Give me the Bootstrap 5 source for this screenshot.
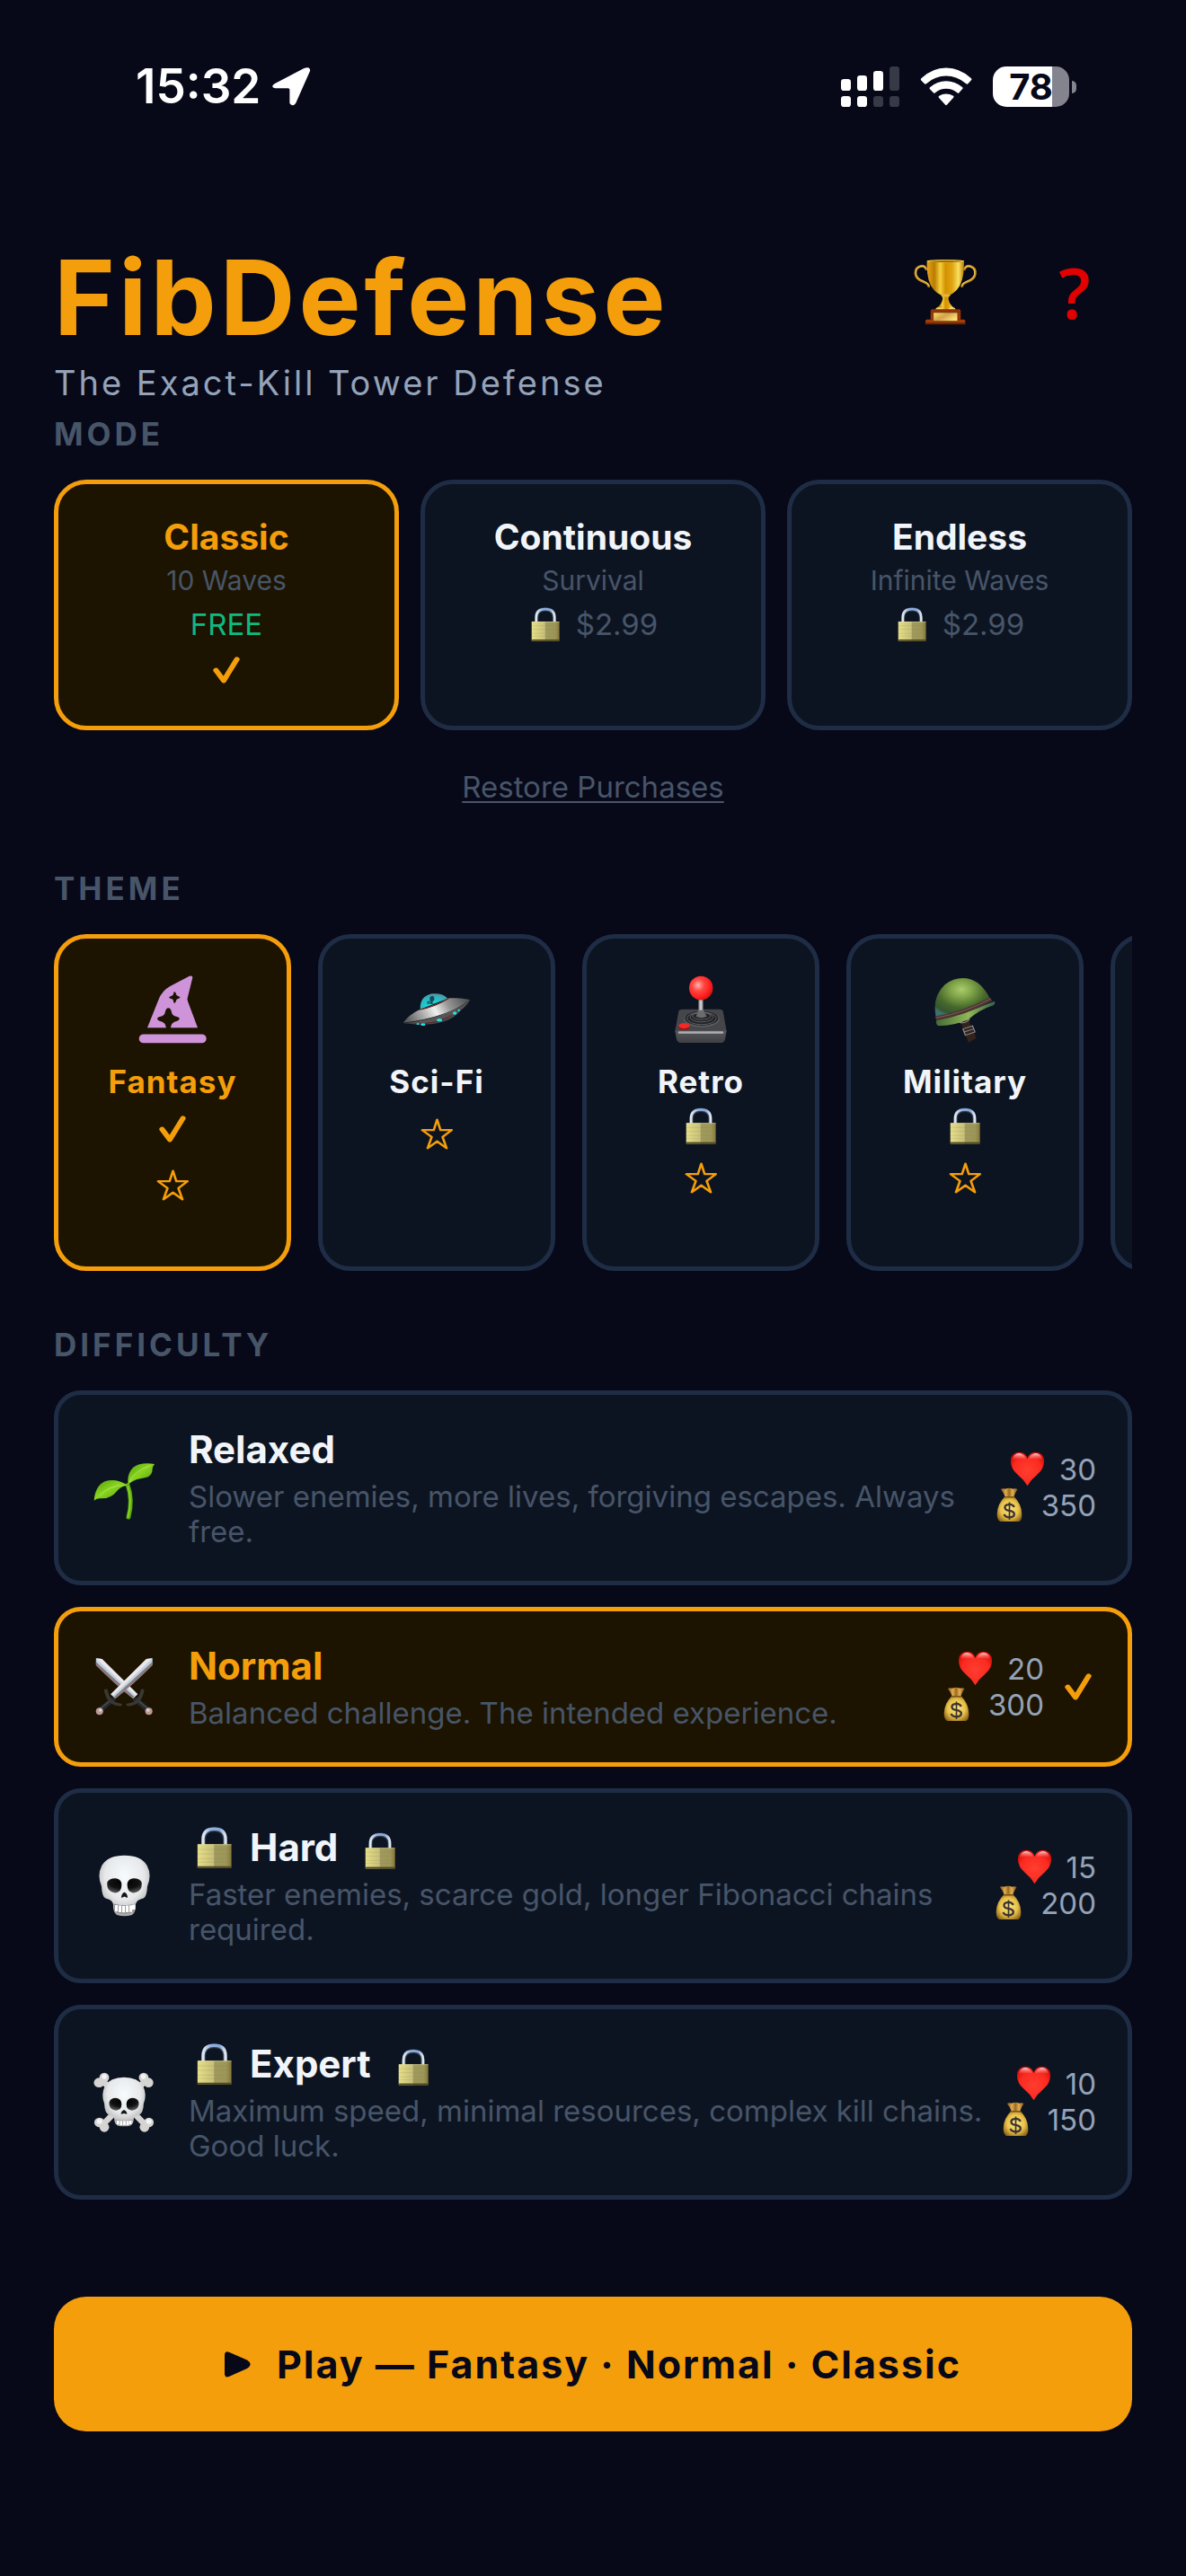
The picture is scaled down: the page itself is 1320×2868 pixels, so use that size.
<!DOCTYPE html>
<html lang="en" data-bs-theme="dark">
<head>
<meta charset="utf-8">
<meta name="viewport" content="width=device-width, initial-scale=1">
<title>FibDefense</title>
<link href="https://cdn.jsdelivr.net/npm/bootstrap@5.3.0/dist/css/bootstrap.min.css" rel="stylesheet">
<style>
:root{--ink:#070818;--panel:#0d1421;--line:#1e2d45;--gold:#f59e0b;--gold-bg:#1c1400;--dim:#475569;--soft:#94a3b8;--snow:#f1f5f9}
body{background:var(--ink);color:var(--snow);font-family:Inter,"Liberation Sans",sans-serif;font-size:33px;line-height:40px;min-height:100vh}
svg{display:block;flex:none}
.defs{position:absolute;width:0;height:0}
.gutter{padding-left:60px;padding-right:60px}
/* status bar */
.status{padding:64px 122px 0 151px;color:#fff}
.status-row{height:65px}
.clock{font-size:53px;font-weight:600;line-height:65px}
.clock-group{gap:13px}
.status-icons{gap:23px}
.cell{width:85px;height:45px;border-radius:15px;background:linear-gradient(to right,#fff 66px,#84848e 66px);color:var(--ink);font-size:40px;line-height:45px;font-weight:700}
.cell-tip{width:5px;height:14px;border-radius:0 5px 5px 0;background:#84848e;margin-left:3px}
/* heading */
.top{padding-top:130px;margin-bottom:11px}
.brand{font-size:116px;line-height:144px;font-weight:700;letter-spacing:4px;color:var(--gold)}
.tagline{font-size:38px;line-height:46px;letter-spacing:3px;color:var(--soft)}
.icon-btn{width:128px;height:132px;color:#e20000;font:600 78px/132px "Open Sans",sans-serif}
.plain-btn{background:none;border:0;padding:0}
.section-label{font-size:35px;line-height:46px;font-weight:700;letter-spacing:4px;color:var(--dim);margin:0 0 28px}
/* option panels */
.option{background:var(--panel);border:5px solid var(--line);border-radius:36px;color:var(--snow);padding:0}
.option.chosen{background:var(--gold-bg);border-color:var(--gold)}
.chosen .name{color:var(--gold)}
.name{font-weight:700}
.modes{gap:24px}
.mode{padding:34px 12px 37px}
.mode .name{font-size:39px;line-height:50px}
.mode .note{font-size:30px;line-height:46px;color:var(--dim)}
.price{height:52px;gap:15px;color:var(--dim)}
.free{color:#10b981}
.tick-row{height:50px}
.restore{margin:43px 0 70px}
.restore a{color:var(--dim);text-underline-offset:4px;text-decoration-thickness:2px}
.themes{gap:30px;margin-bottom:59px}
.theme{flex:0 0 264px;height:375px;padding-top:41px}
.theme .name{font-size:35px;line-height:44px;letter-spacing:1px;margin-top:20px}
.pic{width:76px;height:76px;flex:none}
.mark-tick{height:57px;padding-top:4px}
.mark-lock{height:49px;padding-top:6px}
.mark-star{height:66px;margin-top:3px}
.levels{gap:24px}
.level{border-radius:30px;padding:34px 35px 35px}
.level .name{font-size:42px;line-height:54px;gap:12px}
.level .blurb{line-height:39px;color:var(--dim);margin-top:6px}
.level-text{padding-left:34px;min-width:0}
.lock-lead{width:56px;padding-bottom:3px}
.lock-tail{margin-left:18px;padding-bottom:3px}
.stats{color:var(--soft)}
.stat{gap:16px}
.level-tick{width:35px;margin-left:23px}
.play{margin:108px 0 100px;height:150px;border:0;border-radius:36px;background:var(--gold);color:var(--ink);font-size:43px;font-weight:700;letter-spacing:2px;gap:29px}
</style>
</head>
<body>
<svg class="defs" aria-hidden="true">
<defs>
<linearGradient id="gold" x1="0" x2="1"><stop offset="0" stop-color="#e9a51c"/><stop offset=".2" stop-color="#b87c00"/><stop offset=".36" stop-color="#f6cf3c"/><stop offset=".5" stop-color="#d39100"/><stop offset=".68" stop-color="#e0a414"/><stop offset=".85" stop-color="#f9e15e"/><stop offset="1" stop-color="#b97a05"/></linearGradient>
<linearGradient id="wood" x1="0" x2="0" y1="0" y2="1"><stop offset="0" stop-color="#8a3208"/><stop offset="1" stop-color="#a33a08"/></linearGradient>
<linearGradient id="plate" x1="0" x2="1" y1="0" y2=".6"><stop offset="0" stop-color="#fde26a"/><stop offset=".5" stop-color="#d3a24a"/><stop offset="1" stop-color="#fbe37a"/></linearGradient>
<linearGradient id="brass" x1="0" x2="1"><stop offset="0" stop-color="#e6e08c"/><stop offset=".3" stop-color="#d2ca7c"/><stop offset=".47" stop-color="#c8c07c"/><stop offset=".5" stop-color="#a09a5e"/><stop offset=".85" stop-color="#9c9658"/><stop offset="1" stop-color="#86763a"/></linearGradient>
<linearGradient id="steel" x1="0" x2="1"><stop offset="0" stop-color="#dfeaf5"/><stop offset=".35" stop-color="#8fb0e0"/><stop offset=".75" stop-color="#86a8dc"/><stop offset="1" stop-color="#dfe8f2"/></linearGradient>
<linearGradient id="saucer" x1="0" x2="1" y1=".6" y2=".4"><stop offset="0" stop-color="#5c5c5c"/><stop offset=".25" stop-color="#a8a8a8"/><stop offset=".48" stop-color="#f0f0ee"/><stop offset=".7" stop-color="#989898"/><stop offset="1" stop-color="#555"/></linearGradient>
<radialGradient id="dome" cx=".5" cy=".8" r=".8"><stop offset="0" stop-color="#16e0dc"/><stop offset=".7" stop-color="#2db6c0"/><stop offset="1" stop-color="#5a8ea0"/></radialGradient>
<radialGradient id="ball" cx=".38" cy=".38" r=".7"><stop offset="0" stop-color="#ffb3ae"/><stop offset=".35" stop-color="#ff4a44"/><stop offset=".7" stop-color="#ff2020"/><stop offset="1" stop-color="#c81010"/></radialGradient>
<linearGradient id="stick" x1="0" x2="1"><stop offset="0" stop-color="#777"/><stop offset=".5" stop-color="#ddd"/><stop offset="1" stop-color="#777"/></linearGradient>
<linearGradient id="casefront" x1="0" x2="0" y1="0" y2="1"><stop offset="0" stop-color="#57585c"/><stop offset="1" stop-color="#3f4044"/></linearGradient>
<radialGradient id="shell" cx=".48" cy=".28" r=".68"><stop offset="0" stop-color="#a9cc6c"/><stop offset=".3" stop-color="#7fa348"/><stop offset=".65" stop-color="#47682c"/><stop offset=".9" stop-color="#35562f"/><stop offset="1" stop-color="#3f706c"/></radialGradient>
<linearGradient id="rim" x1="0" x2="1"><stop offset="0" stop-color="#456a38"/><stop offset=".55" stop-color="#8fb856"/><stop offset="1" stop-color="#34604c"/></linearGradient>
<linearGradient id="leaf" x1="0" x2="1" y1="0" y2="1"><stop offset="0" stop-color="#4f9c08"/><stop offset=".45" stop-color="#8ad420"/><stop offset="1" stop-color="#4b960c"/></linearGradient>
<radialGradient id="bone" cx=".5" cy=".35" r=".65"><stop offset="0" stop-color="#f7fbfd"/><stop offset=".6" stop-color="#e6e8ea"/><stop offset="1" stop-color="#a9a8a6"/></radialGradient>
<radialGradient id="socket" cx=".5" cy=".3" r=".7"><stop offset="0" stop-color="#000"/><stop offset=".6" stop-color="#111"/><stop offset="1" stop-color="#555"/></radialGradient>
<radialGradient id="heartfill" cx=".5" cy=".55" r=".6"><stop offset="0" stop-color="#ff3e30"/><stop offset=".7" stop-color="#fb2a20"/><stop offset="1" stop-color="#d80c08"/></radialGradient>
<linearGradient id="shine" x1="0" x2="0" y1="0" y2="1"><stop offset="0" stop-color="#fff" stop-opacity=".85"/><stop offset="1" stop-color="#ff6a60" stop-opacity="0"/></linearGradient>
<radialGradient id="sack" cx=".5" cy=".5" r=".6"><stop offset="0" stop-color="#ffe680"/><stop offset=".6" stop-color="#e8c14a"/><stop offset="1" stop-color="#8e6418"/></radialGradient>
<linearGradient id="sacktop" x1="0" x2="1"><stop offset="0" stop-color="#7c4f10"/><stop offset=".3" stop-color="#e0ac50"/><stop offset=".5" stop-color="#9a6a1c"/><stop offset=".7" stop-color="#e3b056"/><stop offset="1" stop-color="#7c4f10"/></linearGradient>
</defs>
<symbol id="i-signal" viewBox="51 42 195 135"><g fill="#fff"><rect x="51" y="84" width="33" height="39" rx="10"/><rect x="105" y="72" width="33" height="51" rx="10"/><rect x="159" y="57" width="33" height="66" rx="10"/><rect x="51" y="141" width="33" height="36" rx="10"/><rect x="105" y="141" width="33" height="36" rx="10"/></g><g fill="#383946"><rect x="213" y="42" width="33" height="81" rx="10"/><rect x="159" y="141" width="33" height="36" rx="10"/><rect x="213" y="141" width="33" height="36" rx="10"/></g></symbol>
<symbol id="i-wifi" viewBox="313 44 175 128"><g fill="#fff"><path d="M317 80Q355 45 400.500 45Q446 45 485 80Q488 83 485 86L474 98Q471 101 468 98Q437 72 400.500 72Q364 72 334 98Q331 101 328 98L316 86Q314 83 317 80Z"/><path d="M346 110Q371 89 400.500 89Q430 89 456 110Q458 113 456 115L444 128Q441 131 438 128Q421 115 400.500 115Q380 115 364 128Q361 131 358 128L346 116Q343 113 346 110Z"/><path d="M377 139Q388 132 400.500 132Q413 132 425 139Q428 142 425 145L403 169Q400.500 172 398 169L376 145Q373 142 377 139Z"/></g></symbol>
<symbol id="i-arrow" viewBox="360 111 51 127" preserveAspectRatio="none"><path fill="#fff" d="M363 165L402 114Q410 107 410 122L391 229Q387 242 383 229V184Q383 180 380 180H364Q357 176 363 165Z"/></symbol>
<symbol id="i-trophy" viewBox="297 687 212 218"><g fill="none" stroke="#c99019" stroke-width="8"><path d="M340 722Q334 706 320 709Q300 714 303 736Q306 752 328 760Q350 768 346 779"/><path d="M464 722Q470 706 484 709Q504 714 501 736Q498 752 476 760Q454 768 458 779"/></g><g fill="none" stroke="#f8df7a" stroke-width="2.500"><path d="M337 715Q330 706 319 710Q302 716 305 736Q308 750 328 758Q346 765 347 774"/><path d="M467 715Q474 706 485 710Q502 716 499 736Q496 750 476 758Q458 765 457 774"/></g><path fill="url(#gold)" d="M341 692Q402 684 464 692Q466 760 440 788Q424 804 412 806L392 806Q378 803 364 788Q338 760 341 692Z"/><ellipse cx="402.500" cy="692" rx="62" ry="4.500" fill="#ffd84a"/><ellipse cx="402.500" cy="693" rx="55" ry="2.500" fill="#7a4c00"/><path fill="url(#gold)" d="M390 804H416L412 816Q413 836 434 850Q438 857 430 857H374Q366 857 370 850Q392 836 393 816Z"/><ellipse cx="403" cy="806" rx="16" ry="5" fill="#e3b53a"/><ellipse cx="382" cy="851" rx="11" ry="5" fill="#f7db70"/><ellipse cx="424" cy="851" rx="11" ry="5" fill="#f7db70"/><path fill="url(#wood)" d="M357 852H449L453 856V886H353V856Z"/><path fill="#a33e0a" d="M339 886H465L468 891V902H336V891Z"/><path fill="#6d2204" d="M336 897H468V903H336Z"/><rect x="362" y="863" width="81" height="29" fill="url(#plate)" stroke="#6b3208" stroke-width="2"/></symbol>
<symbol id="i-check" viewBox="357 875 80 90" preserveAspectRatio="none"><path fill="none" stroke="#f59e0b" stroke-width="16" stroke-linecap="round" stroke-linejoin="round" d="M366 921L389 955L428 884"/></symbol>
<symbol id="i-star" viewBox="349 1054 98 106" preserveAspectRatio="none"><path fill="none" stroke="#f59e0b" stroke-width="7" stroke-linejoin="round" d="M398 1059L408 1094H441L414 1117L426 1155L398 1132L370 1155L382 1117L354 1094H388Z"/></symbol>
<symbol id="i-lock" viewBox="480 501 94 112"><path fill="none" stroke="#39404c" stroke-width="12" d="M498 551V535Q498 508 527 508Q556 508 556 535V551"/><path fill="none" stroke="url(#steel)" stroke-width="8" d="M497 551V535Q497 507 527 507Q557 507 557 535V551"/><rect x="482" y="548" width="91" height="64" rx="2" fill="url(#brass)"/><path stroke="#8b8145" stroke-opacity=".35" stroke-width="1.500" d="M483 562H572M483 574H572M483 587H572M483 596H572"/><rect x="482" y="607" width="91" height="5" fill="#51491f"/><rect x="482" y="548" width="91" height="2.500" fill="#f0eab0" fill-opacity=".5"/></symbol>
<symbol id="i-hat" viewBox="298 412 198 222" preserveAspectRatio="none"><path fill="#ce93d8" d="M324 582L356 492Q366 462 390 447L446 414Q456 412 455 420L440 488Q440 492 442 498L470 582Z"/><rect x="300" y="603" width="195" height="29" rx="13" fill="#ce93d8"/><g fill="#1c1400"><path d="M385 518Q392 518 395 534Q397 543 408 546Q417 548 417 553Q417 558 408 561Q396 565 394 572L391 584H379L376 572Q374 565 362 561Q353 558 353 553Q353 548 362 546Q373 543 375 534Q378 518 385 518Z"/><path d="M403 465Q406 465 408 475Q409 478 413 479Q419 481 419 483Q419 486 413 488Q409 489 408 492Q406 502 403 502Q400 502 399 492Q398 489 393 488Q387 486 387 483Q387 481 393 479Q398 478 399 475Q400 465 403 465Z"/></g></symbol>
<symbol id="i-ufo" viewBox="1064 457 200 114" preserveAspectRatio="none"><path fill="#4a4a4a" d="M1068 560Q1130 566 1180 550Q1230 530 1262 482L1225 528Q1190 566 1110 564Z"/><path fill="url(#dome)" d="M1116 513Q1114 470 1150 461Q1182 458 1196 477Z"/><path fill="#174a56" d="M1145 472q8-8 12 2q2 8-5 13v6l8 2h-16l3-8q-6-6-2-15Z"/><path fill="#0e6f78" d="M1135 488l10-4v10l-8 3Z"/><path fill="url(#saucer)" d="M1066 558Q1082 532 1114 514Q1158 504 1198 476Q1240 474 1262 482Q1232 508 1190 526Q1130 550 1066 558Z"/><path fill="none" stroke="#6c1712" stroke-width="3" d="M1112 515Q1160 505 1200 476"/><path fill="#555" d="M1068 560Q1134 552 1190 526Q1234 508 1261 484Q1240 520 1200 540Q1150 566 1068 560Z"/><path fill="none" stroke="#7d211c" stroke-width="2" d="M1106 562Q1180 562 1230 514"/><g fill="#20e3e8"><ellipse cx="1172" cy="549" rx="8" ry="5"/><ellipse cx="1217" cy="526" rx="6" ry="5"/><ellipse cx="1124" cy="564" rx="7" ry="4"/><ellipse cx="1109" cy="562" rx="4" ry="3"/><ellipse cx="1229" cy="517" rx="3" ry="4"/></g></symbol>
<symbol id="i-joystick" viewBox="288 400 136 232" preserveAspectRatio="none"><path fill="#45464a" d="M300 522Q302 515 310 515H402Q411 515 412 522L421 590H291Z"/><ellipse cx="358" cy="549" rx="45" ry="27" fill="#5a5b60"/><ellipse cx="358" cy="546" rx="42" ry="25" fill="#232427"/><g fill="none" stroke="#6b6c70" stroke-width="2"><ellipse cx="358" cy="546" rx="37" ry="21"/><ellipse cx="358" cy="542" rx="29" ry="16"/><ellipse cx="358" cy="538" rx="23" ry="12"/></g><path fill="#6b6c70" d="M344 540L350 516H362L371 540Q358 548 344 540Z"/><rect x="350" y="480" width="12" height="38" fill="url(#stick)"/><ellipse cx="356.500" cy="443" rx="30" ry="41" fill="url(#ball)"/><path fill="url(#casefront)" d="M291 588H421L417 618Q414 629 406 629H306Q298 629 295 618Z"/><rect x="299" y="590" width="114" height="8" rx="3" fill="#aeafb3"/><ellipse cx="314" cy="575" rx="14" ry="10" fill="#a80f0f"/><ellipse cx="314" cy="571" rx="14" ry="9" fill="#f02a28"/></symbol>
<symbol id="i-helmet" viewBox="936 406 158 218" preserveAspectRatio="none"><path fill="#33231d" d="M1004 556L1024 548L1044 608L1024 623Z"/><path fill="none" stroke="#8b8b8b" stroke-width="3" d="M1010 578L1034 568L1040 588L1016 599ZM1012 588L1037 578M1001 556Q1016 562 1027 545"/><path fill="url(#rim)" d="M944 545Q1010 530 1089 486Q1093 494 1086 499Q1050 514 1022 548Q980 570 947 567Q940 560 944 545Z"/><path fill="url(#shell)" d="M942 538Q932 470 965 430Q990 404 1020 410Q1056 418 1078 478Q1020 525 942 545Z"/><path fill="none" stroke="#4b3432" stroke-width="14" d="M942 543Q1016 526 1080 479"/><path fill="none" stroke="#8a6c62" stroke-width="2" d="M942 541Q1014 525 1080 477"/></symbol>
<symbol id="i-sprout" viewBox="141 505 158 192" preserveAspectRatio="none"><path fill="none" stroke="#5aa90e" stroke-width="11" stroke-linecap="round" d="M229 580Q243 630 231 690"/><path fill="none" stroke="#8bd424" stroke-width="4" stroke-linecap="round" d="M230 586Q241 632 230 688"/><path fill="url(#leaf)" d="M145 633Q147 585 172 569Q200 557 230 583Q214 583 203 600Q188 626 164 626Q152 624 145 633Z"/><path fill="url(#leaf)" d="M231 581Q226 545 243 522Q262 504 297 511Q290 520 291 536Q288 556 264 559Q240 564 231 581Z"/><path fill="none" stroke="#b9ea6a" stroke-width="2" d="M160 616Q180 582 226 581M233 572Q245 535 286 516"/></symbol>
<symbol id="i-swords" viewBox="146 1156 148 198" preserveAspectRatio="none"><g id="blade"><path fill="#b9d3e2" d="M150 1160L165 1162L254 1280L243 1295Q196 1245 150 1180Z"/><path fill="#efe6ea" d="M150 1160L165 1162L254 1280L249 1285Z"/><path fill="#8a787c" d="M150 1172L245 1288L243 1295Q196 1245 150 1184Z"/><path stroke="#26292d" stroke-width="15" stroke-linecap="round" d="M250 1298L278 1330"/><path stroke="#4a4e54" stroke-width="4" stroke-linecap="round" d="M254 1300L278 1326"/><path fill="none" stroke="#3a3835" stroke-width="9" stroke-linecap="round" d="M266 1267Q260 1313 230 1315"/><ellipse cx="282" cy="1337" rx="9" ry="12" fill="#b99a98"/><ellipse cx="280" cy="1333" rx="4" ry="5" fill="#e6d3d0"/></g><use href="#blade" transform="matrix(-1 0 0 1 441 0)"/></symbol>
<symbol id="i-skull" viewBox="155 288 132 206" preserveAspectRatio="none"><path fill="url(#bone)" d="M221 290Q262 290 277 323Q290 356 278 393Q277 428 268 433Q252 437 249 452Q250 480 240 488Q221 496 202 488Q192 480 193 452Q190 437 174 433Q165 428 164 393Q152 356 165 323Q180 290 221 290Z"/><path fill="url(#socket)" d="M178 380Q181 366 199 366Q214 368 214 388Q214 412 199 415Q176 412 178 380ZM264 380Q261 366 243 366Q228 368 228 388Q228 412 243 415Q266 412 264 380Z"/><path fill="#141414" d="M221 413Q228 417 229 430Q225 431 221 427Q217 431 213 430Q214 417 221 413Z"/><path fill="#8f8f8f" d="M194 451Q221 461 248 451L245 478Q221 490 197 478Z"/><path stroke="#fff" stroke-width="7" d="M201 455V477M210 457V479M219 458V480M228 457V479M237 456V478M244 454V470"/></symbol>
<symbol id="i-crossbones" viewBox="145 1015 152 201" preserveAspectRatio="none"><g fill="#d6d4d2"><path stroke="#d6d4d2" stroke-width="17" d="M165 1040L276 1194M277 1040L166 1194"/><ellipse cx="172" cy="1033" rx="12" ry="16"/><ellipse cx="159" cy="1050" rx="13" ry="16"/><ellipse cx="270" cy="1033" rx="12" ry="16"/><ellipse cx="282" cy="1050" rx="12" ry="16"/><ellipse cx="160" cy="1183" rx="13" ry="16"/><ellipse cx="172" cy="1199" rx="12" ry="16"/><ellipse cx="283" cy="1183" rx="12" ry="16"/><ellipse cx="272" cy="1199" rx="12" ry="16"/></g><g fill="#f4f4f4"><ellipse cx="172" cy="1030" rx="6" ry="8"/><ellipse cx="269" cy="1030" rx="6" ry="8"/><ellipse cx="160" cy="1180" rx="7" ry="8"/><ellipse cx="283" cy="1180" rx="7" ry="8"/></g><path fill="url(#bone)" d="M221 1032Q256 1033 268 1060Q279 1090 270 1120Q269 1153 258 1158Q246 1161 245 1172Q245 1190 236 1194Q221 1198 206 1194Q197 1190 197 1172Q196 1161 184 1158Q173 1153 172 1120Q163 1090 174 1060Q186 1033 221 1032Z"/><path fill="url(#socket)" d="M184 1116Q187 1101 201 1101Q215 1104 215 1122Q215 1141 201 1143Q183 1140 184 1116ZM258 1116Q255 1101 241 1101Q227 1104 227 1122Q227 1141 241 1143Q259 1140 258 1116Z"/><path fill="#141414" d="M221 1141Q227 1144 229 1154Q225 1156 221 1152Q217 1156 213 1154Q215 1144 221 1141Z"/><path fill="#a2a2a2" d="M200 1173Q221 1179 242 1173L240 1188Q221 1196 202 1188Z"/><path stroke="#fff" stroke-width="6" d="M206 1177V1190M214 1178V1192M222 1178V1192M230 1178V1192M237 1177V1189"/></symbol>
<symbol id="i-heart" viewBox="99 56 116 118"><path fill="url(#heartfill)" d="M157 172Q144 150 124 134Q101 114 101 89Q101 59 130 58Q149 58 157 80Q165 58 184 58Q213 59 213 89Q213 114 190 134Q170 150 157 172Z"/><path fill="url(#shine)" d="M107 86Q108 63 130 62Q147 64 152 82Q130 76 107 86ZM207 86Q206 63 184 62Q167 64 162 82Q184 76 207 86Z"/></symbol>
<symbol id="i-bag" viewBox="54 174 88 116"><path fill="url(#sack)" d="M84 204H112Q138 228 139 262Q140 282 130 287H67Q57 282 57 262Q58 228 84 204Z"/><path fill="url(#sacktop)" d="M69 180Q76 176 84 179Q97 174 110 179Q118 176 125 180Q116 192 112 206H84Q80 192 69 180Z"/><path stroke="#7a5312" stroke-width="5" stroke-linecap="round" d="M83 206H113"/><path fill="none" stroke="#3b3330" stroke-width="7" d="M114 239Q109 230 98 230Q83 231 83 240Q83 249 98 251Q114 254 114 263Q113 273 98 273Q85 273 80 263"/><path stroke="#3b3330" stroke-width="5" d="M98 223V281"/></symbol>
<symbol id="i-play" viewBox="255 264 36 86" preserveAspectRatio="none"><path fill="#070818" d="M255 274Q256 261 261 266L286 292Q295 306 286 320L261 347Q256 352 255 340Z"/></symbol>
</svg>

<div class="status">
  <div class="status-row d-flex align-items-center justify-content-between">
    <div class="clock-group d-flex align-items-center"><span class="clock">15:32</span><svg width="43" height="43"><use href="#i-arrow"/></svg></div>
    <div class="status-icons d-flex align-items-center">
      <svg width="65" height="45"><use href="#i-signal"/></svg>
      <svg width="58" height="43"><use href="#i-wifi"/></svg>
      <div class="d-flex align-items-center"><span class="cell text-center">78</span><span class="cell-tip"></span></div>
    </div>
  </div>
</div>

<main class="gutter">
  <header class="top d-flex justify-content-between align-items-start">
    <div>
      <h1 class="brand m-0">FibDefense</h1>
      <p class="tagline m-0">The Exact-Kill Tower Defense</p>
    </div>
    <div class="d-flex gap-3">
      <button type="button" class="icon-btn plain-btn d-flex align-items-center justify-content-center" aria-label="Leaderboard"><svg width="71" height="73"><use href="#i-trophy"/></svg></button>
      <button type="button" class="icon-btn plain-btn">?</button>
    </div>
  </header>

  <section>
    <h2 class="section-label">MODE</h2>
    <div class="modes d-flex">
      <button type="button" class="option mode chosen flex-fill w-100 d-flex flex-column align-items-center" aria-pressed="true">
        <span class="name">Classic</span><span class="note">10 Waves</span>
        <span class="price free d-flex align-items-center">FREE</span>
        <span class="tick-row d-flex align-items-center"><svg width="30" height="30"><use href="#i-check"/></svg></span>
      </button>
      <button type="button" class="option mode flex-fill w-100 d-flex flex-column align-items-center" aria-pressed="false">
        <span class="name">Continuous</span><span class="note">Survival</span>
        <span class="price d-flex align-items-center"><svg width="38" height="38"><use href="#i-lock"/></svg>$2.99</span>
      </button>
      <button type="button" class="option mode flex-fill w-100 d-flex flex-column align-items-center" aria-pressed="false">
        <span class="name">Endless</span><span class="note">Infinite Waves</span>
        <span class="price d-flex align-items-center"><svg width="38" height="38"><use href="#i-lock"/></svg>$2.99</span>
      </button>
    </div>
    <p class="restore text-center"><a href="#restore">Restore Purchases</a></p>
  </section>

  <section>
    <h2 class="section-label">THEME</h2>
    <div class="themes d-flex overflow-hidden">
      <button type="button" class="option theme chosen d-flex flex-column align-items-center" aria-pressed="true">
        <svg class="pic"><use href="#i-hat"/></svg><span class="name">Fantasy</span>
        <span class="mark-tick d-flex align-items-center"><svg width="30" height="30"><use href="#i-check"/></svg></span>
        <span class="mark-star d-flex align-items-center"><svg width="37" height="35"><use href="#i-star"/></svg></span>
      </button>
      <button type="button" class="option theme d-flex flex-column align-items-center" aria-pressed="false">
        <span class="pic d-flex align-items-center justify-content-center"><svg width="76" height="38"><use href="#i-ufo"/></svg></span><span class="name">Sci-Fi</span>
        <span class="mark-star d-flex align-items-center"><svg width="37" height="35"><use href="#i-star"/></svg></span>
      </button>
      <button type="button" class="option theme d-flex flex-column align-items-center" aria-pressed="false">
        <span class="pic d-flex align-items-center justify-content-center"><svg width="60" height="76"><use href="#i-joystick"/></svg></span><span class="name">Retro</span>
        <span class="mark-lock d-flex align-items-center"><svg width="34" height="41"><use href="#i-lock"/></svg></span>
        <span class="mark-star d-flex align-items-center"><svg width="37" height="35"><use href="#i-star"/></svg></span>
      </button>
      <button type="button" class="option theme d-flex flex-column align-items-center" aria-pressed="false">
        <span class="pic d-flex align-items-center justify-content-center"><svg width="70" height="73"><use href="#i-helmet"/></svg></span><span class="name">Military</span>
        <span class="mark-lock d-flex align-items-center"><svg width="34" height="41"><use href="#i-lock"/></svg></span>
        <span class="mark-star d-flex align-items-center"><svg width="37" height="35"><use href="#i-star"/></svg></span>
      </button>
      <button type="button" class="option theme" aria-label="More themes"></button>
    </div>
  </section>

  <section>
    <h2 class="section-label">DIFFICULTY</h2>
    <div class="levels d-flex flex-column">
      <button type="button" class="option level d-flex align-items-center text-start" aria-pressed="false">
        <span class="pic d-flex align-items-center justify-content-center pt-2"><svg width="70" height="64"><use href="#i-sprout"/></svg></span>
        <span class="level-text flex-fill"><span class="name d-flex">Relaxed</span><span class="blurb d-block">Slower enemies, more lives, forgiving escapes. Always free.</span></span>
        <span class="stats d-flex flex-column align-items-end"><span class="stat d-flex"><svg width="39" height="39"><use href="#i-heart"/></svg>30</span><span class="stat d-flex"><svg width="39" height="39"><use href="#i-bag"/></svg>350</span></span>
      </button>
      <button type="button" class="option level chosen d-flex align-items-center text-start" aria-pressed="true">
        <span class="pic d-flex align-items-center justify-content-center"><svg width="66" height="66"><use href="#i-swords"/></svg></span>
        <span class="level-text flex-fill"><span class="name d-flex">Normal</span><span class="blurb d-block">Balanced challenge. The intended experience.</span></span>
        <span class="stats d-flex flex-column align-items-end"><span class="stat d-flex"><svg width="39" height="39"><use href="#i-heart"/></svg>20</span><span class="stat d-flex"><svg width="39" height="39"><use href="#i-bag"/></svg>300</span></span>
        <span class="level-tick"><svg width="30" height="30"><use href="#i-check"/></svg></span>
      </button>
      <button type="button" class="option level d-flex align-items-center text-start" aria-pressed="false">
        <span class="pic d-flex align-items-center justify-content-center"><svg width="59" height="69"><use href="#i-skull"/></svg></span>
        <span class="level-text flex-fill"><span class="name d-flex"><span class="lock-lead d-flex align-items-end justify-content-center"><svg width="39" height="48"><use href="#i-lock"/></svg></span>Hard<span class="lock-tail d-flex align-items-end"><svg width="34" height="41"><use href="#i-lock"/></svg></span></span><span class="blurb d-block">Faster enemies, scarce gold, longer Fibonacci chains required.</span></span>
        <span class="stats d-flex flex-column align-items-end"><span class="stat d-flex"><svg width="39" height="39"><use href="#i-heart"/></svg>15</span><span class="stat d-flex"><svg width="39" height="39"><use href="#i-bag"/></svg>200</span></span>
      </button>
      <button type="button" class="option level d-flex align-items-center text-start" aria-pressed="false">
        <span class="pic d-flex align-items-center justify-content-center"><svg width="68" height="67"><use href="#i-crossbones"/></svg></span>
        <span class="level-text flex-fill"><span class="name d-flex"><span class="lock-lead d-flex align-items-end justify-content-center"><svg width="39" height="48"><use href="#i-lock"/></svg></span>Expert<span class="lock-tail d-flex align-items-end"><svg width="34" height="41"><use href="#i-lock"/></svg></span></span><span class="blurb d-block">Maximum speed, minimal resources, complex kill chains. Good luck.</span></span>
        <span class="stats d-flex flex-column align-items-end"><span class="stat d-flex"><svg width="39" height="39"><use href="#i-heart"/></svg>10</span><span class="stat d-flex"><svg width="39" height="39"><use href="#i-bag"/></svg>150</span></span>
      </button>
    </div>
  </section>

  <button type="button" class="play w-100 d-flex align-items-center justify-content-center"><svg width="29" height="29"><use href="#i-play"/></svg>Play — Fantasy · Normal · Classic</button>
</main>
<script src="https://cdn.jsdelivr.net/npm/bootstrap@5.3.0/dist/js/bootstrap.bundle.min.js"></script>
</body>
</html>
